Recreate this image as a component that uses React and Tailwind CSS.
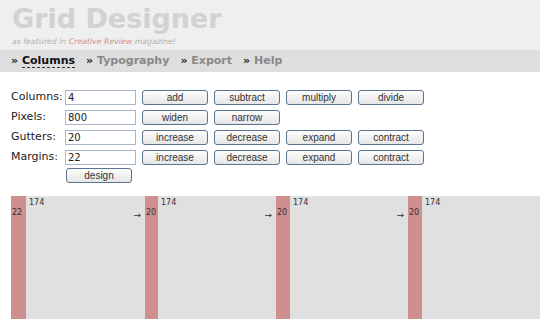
const rows = [
  { label: 'Columns:', value: '4', buttons: ['add', 'subtract', 'multiply', 'divide'] },
  { label: 'Pixels:', value: '800', buttons: ['widen', 'narrow'] },
  { label: 'Gutters:', value: '20', buttons: ['increase', 'decrease', 'expand', 'contract'] },
  { label: 'Margins:', value: '22', buttons: ['increase', 'decrease', 'expand', 'contract'] },
]

function Btn({ children }) {
  return (
    <button className="w-[66px] h-[15px] rounded-[3px] border border-[#5a7390] bg-gradient-to-b from-[#fdfdfd] to-[#e6e6e6] text-[10px] leading-[13px] text-[#333] font-['Liberation_Sans',sans-serif]">
      {children}
    </button>
  )
}

function Column({ width, arrow }) {
  return (
    <div className="flex flex-col shrink-0 h-full" style={{ width }}>
      <div className="pl-[3px] pt-[2px] text-[8px] leading-[9px] text-[#333]">174</div>
      {arrow && <div className="mt-[4px] pr-[4px] text-right text-[9px] leading-[9px] text-[#333]">→</div>}
    </div>
  )
}

function Gutter({ width, label }) {
  return (
    <div className="shrink-0 h-full bg-[#cf8f8f] pt-[12px] pl-[1px] text-[8px] leading-[9px] text-[#333]" style={{ width }}>
      {label}
    </div>
  )
}

export default function App() {
  return (
    <div className="w-[540px] h-[319px] overflow-hidden bg-white font-['DejaVu_Sans',sans-serif]">
      {/* header */}
      <div className="h-[50px] bg-[#efefef] pl-[12px] pt-[3px]">
        <div className="text-[27px] leading-[32px] font-bold text-[#d2d2d2]">Grid Designer</div>
        <div className="text-[7.8px] leading-[10px] italic text-[#b0b0b0] mt-[2px]">
          as featured in <span className="text-[#d48c8c]">Creative Review</span> magazine!
        </div>
      </div>

      {/* nav */}
      <div className="h-[22px] bg-[#dedede] flex items-center pl-[11px] gap-[11px] text-[11px] font-bold text-[#888]">
        <span><span className="text-[#222]">»</span> <span className="text-[#111] border-b border-dashed border-[#333]">Columns</span></span>
        <span><span className="text-[#222]">»</span> Typography</span>
        <span><span className="text-[#222]">»</span> Export</span>
        <span><span className="text-[#222]">»</span> Help</span>
      </div>

      {/* form */}
      <div className="pl-[11px] pt-[18px] flex flex-col gap-[5px]">
        {rows.map((r) => (
          <div key={r.label} className="flex items-center h-[15px]">
            <div className="w-[54px] text-[11px] text-[#222] whitespace-nowrap">{r.label}</div>
            <input
              readOnly
              value={r.value}
              className="w-[71px] h-[15px] border border-[#a9b7c6] px-[2px] text-[10px] text-[#222] outline-none"
            />
            <div className="flex gap-[6px] ml-[6px]">
              {r.buttons.map((b, i) => (
                <Btn key={i}>{b}</Btn>
              ))}
            </div>
          </div>
        ))}
        <div className="flex pl-[55px] -mt-[2px]">
          <Btn>design</Btn>
        </div>
      </div>

      {/* grid preview */}
      <div className="mt-[13px] ml-[11px] h-[130px] bg-[#e0e0e0] flex">
        <Gutter width={15} label="22" />
        <Column width={119} arrow />
        <Gutter width={13} label="20" />
        <Column width={118} arrow />
        <Gutter width={14} label="20" />
        <Column width={118} arrow />
        <Gutter width={14} label="20" />
        <Column width={118} />
      </div>
    </div>
  )
}
